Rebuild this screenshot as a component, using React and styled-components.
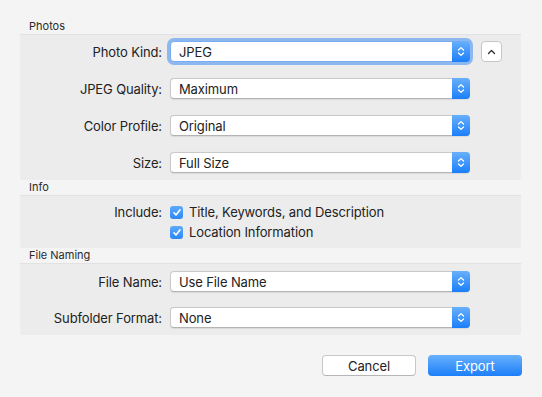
import React from "react";
import styled, { createGlobalStyle, css } from "styled-components";

const Global = createGlobalStyle`
  html, body { margin: 0; padding: 0; background: #f4f4f4; }
  body { font-family: Inter, "Liberation Sans", sans-serif; font-size: 13px; letter-spacing: -0.12px; color: #222; }
  #root { width: 542px; height: 397px; }
`;

const Dialog = styled.div`
  width: 542px;
  height: 397px;
  box-sizing: border-box;
  padding: 19px 20px 0 20px;
  display: flex;
  flex-direction: column;
`;

const SectionHeader = styled.div`
  height: 15px;
  padding-left: 9px;
  font-size: 11px;
  line-height: 14px;
  letter-spacing: 0;
  color: #2a2a2a;
`;

const Panel = styled.div`
  width: 501px;
  box-sizing: border-box;
  background: #ececec;
  border-top: 1px solid #e2e2e2;
  border-radius: 0 0 3px 3px;
  padding: ${(p) => p.$pad || "6px 0 7px 0"};
  display: flex;
  flex-direction: column;
  gap: ${(p) => p.$gap || "16px"};
`;

const Row = styled.div`
  display: grid;
  grid-template-columns: 142px 300px auto;
  column-gap: 8px;
  align-items: center;
  height: ${(p) => p.$h || "21px"};
`;

const Label = styled.div`
  text-align: right;
  white-space: nowrap;
  color: #222;
`;

const SelectBox = styled.div`
  position: relative;
  height: 21px;
  box-sizing: border-box;
  background: #fff;
  border: 1px solid #c9c9c9;
  border-bottom-color: #b4b4b4;
  border-radius: 4px;
  display: flex;
  align-items: center;
  padding-left: 8px;
  box-shadow: 0 0.5px 1px rgba(0,0,0,0.08);
  ${(p) => p.$focused && css`
    box-shadow: 0 0 0 3px rgba(110, 165, 240, 0.75);
    border-color: #7aaef0;
  `}
`;

const Stepper = styled.div`
  position: absolute;
  right: -1px;
  top: -1px;
  bottom: -1px;
  width: 18px;
  border-radius: 0 4px 4px 0;
  background: linear-gradient(#68b0fb, #1b7ffa);
  display: flex;
  align-items: center;
  justify-content: center;
`;

const Disclosure = styled.div`
  width: 21px;
  height: 21px;
  box-sizing: border-box;
  margin-left: 3px;
  background: #fff;
  border: 1px solid #c6c6c6;
  border-radius: 4px;
  display: flex;
  align-items: center;
  justify-content: center;
`;

const ChecksCell = styled.div`
  display: flex;
  align-items: center;
  gap: 6px;
`;

const CheckBox = styled.div`
  width: 13px;
  height: 13px;
  border-radius: 3px;
  background: linear-gradient(#5fa9fb, #2a88f9);
  display: flex;
  align-items: center;
  justify-content: center;
`;

const Footer = styled.div`
  display: flex;
  justify-content: flex-end;
  gap: 12px;
  margin-top: 20px;
  width: 502px;
`;

const Button = styled.div`
  width: 94px;
  height: 21px;
  box-sizing: border-box;
  border-radius: 4px;
  display: flex;
  align-items: center;
  justify-content: center;
  ${(p) => p.$primary ? css`
    background: linear-gradient(#69b1fb, #1b7efa);
    color: #fff;
  ` : css`
    background: #fff;
    border: 1px solid #c8c8c8;
    border-bottom-color: #b6b6b6;
    color: #222;
  `}
`;

const Updown = () => (
  <svg width="8" height="11" viewBox="0 0 8 11">
    <path d="M1.5 4 L4 1.6 L6.5 4 M1.5 7 L4 9.4 L6.5 7" fill="none" stroke="#fff" strokeWidth="1.3" strokeLinecap="round" strokeLinejoin="round" />
  </svg>
);

const Check = () => (
  <svg width="10" height="9" viewBox="0 0 10 9">
    <path d="M2 4.8 L4 7 L8 1.8" fill="none" stroke="#fff" strokeWidth="1.6" strokeLinecap="round" strokeLinejoin="round" />
  </svg>
);

const Select = ({ value, focused }) => (
  <SelectBox $focused={focused}>
    {value}
    <Stepper><Updown /></Stepper>
  </SelectBox>
);

export default function App() {
  return (
    <>
      <Global />
      <Dialog>
        <SectionHeader>Photos</SectionHeader>
        <Panel $pad="6px 0 7px 0" $gap="16px">
          <Row>
            <Label>Photo Kind:</Label>
            <Select value="JPEG" focused />
            <Disclosure>
              <svg width="9" height="6" viewBox="0 0 9 6">
                <path d="M1.5 4.5 L4.5 1.5 L7.5 4.5" fill="none" stroke="#333" strokeWidth="1.4" strokeLinecap="round" strokeLinejoin="round" />
              </svg>
            </Disclosure>
          </Row>
          <Row>
            <Label>JPEG Quality:</Label>
            <Select value="Maximum" />
          </Row>
          <Row>
            <Label>Color Profile:</Label>
            <Select value="Original" />
          </Row>
          <Row>
            <Label>Size:</Label>
            <Select value="Full Size" />
          </Row>
        </Panel>
        <SectionHeader>Info</SectionHeader>
        <Panel $pad="6px 0 6px 0" $gap="0px">
          <Row $h="20px">
            <Label>Include:</Label>
            <ChecksCell><CheckBox><Check /></CheckBox>Title, Keywords, and Description</ChecksCell>
          </Row>
          <Row $h="20px">
            <span />
            <ChecksCell><CheckBox><Check /></CheckBox>Location Information</ChecksCell>
          </Row>
        </Panel>
        <SectionHeader>File Naming</SectionHeader>
        <Panel $pad="7px 0 7px 0" $gap="15px">
          <Row>
            <Label>File Name:</Label>
            <Select value="Use File Name" />
          </Row>
          <Row>
            <Label>Subfolder Format:</Label>
            <Select value="None" />
          </Row>
        </Panel>
        <Footer>
          <Button>Cancel</Button>
          <Button $primary>Export</Button>
        </Footer>
      </Dialog>
    </>
  );
}
